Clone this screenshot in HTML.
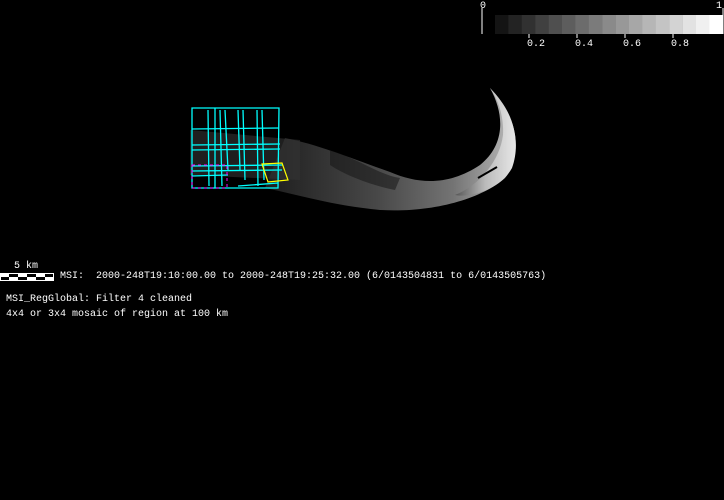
<!DOCTYPE html>
<html><head><meta charset="utf-8"><style>
html,body{margin:0;padding:0;background:#000;width:724px;height:500px;overflow:hidden}
.t{position:absolute;font-family:"Liberation Mono","DejaVu Sans Mono",monospace;font-size:10px;color:#fff;white-space:pre;line-height:10px}
</style></head><body>
<svg width="724" height="500" style="position:absolute;left:0;top:0">
<defs>
<linearGradient id="g" x1="0" y1="0" x2="1" y2="0">
<stop offset="0" stop-color="#222"/><stop offset="0.45" stop-color="#555"/><stop offset="0.75" stop-color="#888"/><stop offset="1" stop-color="#ddd"/>
</linearGradient>
<linearGradient id="c" x1="0" y1="0" x2="1" y2="0">
<stop offset="0" stop-color="#555"/><stop offset="0.5" stop-color="#bbb"/><stop offset="1" stop-color="#e8e8e8"/>
</linearGradient>
</defs>
<g id="cb"></g>
<line x1="482" y1="8" x2="482" y2="34" stroke="#fff"/>
<line x1="723" y1="8" x2="723" y2="34" stroke="#fff"/>
<line x1="529" y1="34" x2="529" y2="38" stroke="#fff"/>
<line x1="577" y1="34" x2="577" y2="38" stroke="#fff"/>
<line x1="625" y1="34" x2="625" y2="38" stroke="#fff"/>
<line x1="673" y1="34" x2="673" y2="38" stroke="#fff"/>
<path d="M265,188 C300,195 330,205 380,210 C430,213 480,200 505,178 C520,160 520,125 500,100 L490,88 C505,115 505,145 480,165 C450,185 420,185 390,172 C350,158 320,145 285,138 Z" fill="url(#g)" opacity="0.85"/>
<path d="M490,88 C512,110 522,140 512,168 C500,190 470,198 455,195 C480,185 500,160 503,135 C504,115 498,100 490,88 Z" fill="url(#c)"/>
<path d="M330,150 C360,160 380,175 400,178 L395,190 C370,185 345,175 330,165 Z" fill="#111" opacity="0.5"/>
<path d="M190,130 L300,140 L300,180 L190,175 Z" fill="#333" opacity="0.6"/>
<line x1="478" y1="178" x2="497" y2="167" stroke="#000" stroke-width="2"/>
<g fill="none" stroke="#0ff" stroke-width="1.3">
<path d="M192,108 L279,108 L278,188 L192,188 Z"/>
<path d="M192,129 L279,128 M192,145 L280,144 M192,150 L280,149 M192,166 L283,165 M192,171 L282,170"/>
<path d="M215,108 L215,188 M220,110 L222,186 M225,110 L228,170 M238,110 L240,170 M243,110 L245,180 M257,110 L258,186 M262,110 L264,180 M208,110 L209,186"/>
<path d="M192,176 L228,175 M238,186 L278,183"/>
</g>
<path d="M192,165 L227,165 L227,188 L192,188 Z" fill="none" stroke="#f0f" stroke-width="1" stroke-dasharray="3,3"/>
<path d="M262,164 L282,163 L288,180 L268,182 Z" fill="none" stroke="#ff0" stroke-width="1.2"/>
<rect x="0.5" y="273.5" width="53" height="7" fill="#000" stroke="#fff"/>
<rect x="0" y="274" width="9" height="3" fill="#fff"/><rect x="18" y="274" width="9" height="3" fill="#fff"/><rect x="36" y="274" width="9" height="3" fill="#fff"/>
<rect x="9" y="277" width="9" height="3" fill="#fff"/><rect x="27" y="277" width="9" height="3" fill="#fff"/><rect x="45" y="277" width="9" height="3" fill="#fff"/>
</svg>
<div class="t" style="left:480px;top:2px">0</div>
<div class="t" style="left:716px;top:2px">1</div>
<div class="t" style="left:527px;top:40px">0.2</div>
<div class="t" style="left:575px;top:40px">0.4</div>
<div class="t" style="left:623px;top:40px">0.6</div>
<div class="t" style="left:671px;top:40px">0.8</div>
<div class="t" style="left:14px;top:262px">5 km</div>
<div class="t" style="left:60px;top:272px">MSI:  2000-248T19:10:00.00 to 2000-248T19:25:32.00 (6/0143504831 to 6/0143505763)</div>
<div class="t" style="left:6px;top:295px">MSI_RegGlobal: Filter 4 cleaned</div>
<div class="t" style="left:6px;top:310px">4x4 or 3x4 mosaic of region at 100 km</div>
<script>
var g=document.getElementById('cb'),s='';
for(var i=0;i<17;i++){var v=Math.round(20+i*235/16);var x=495+i*13.4;
s+='<rect x="'+x+'" y="15" width="13.6" height="19" fill="rgb('+v+','+v+','+v+')"/>';}
g.innerHTML=s;
</script>
</body></html>
